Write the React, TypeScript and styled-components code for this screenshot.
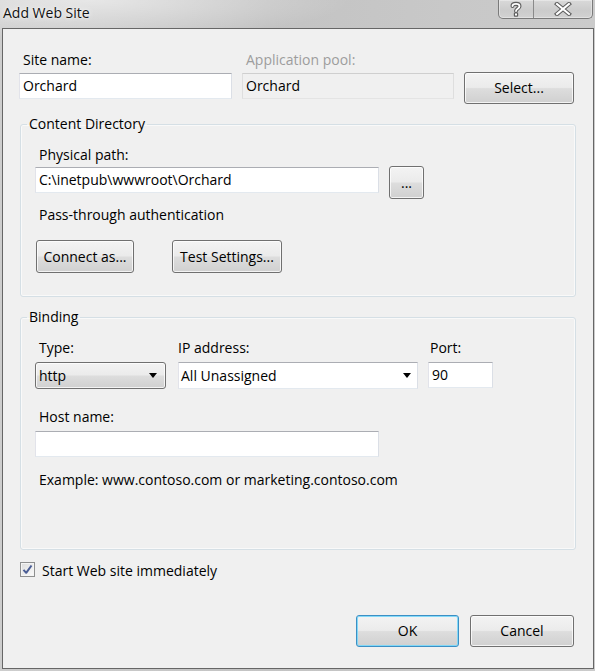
import React from "react";
import styled, { createGlobalStyle } from "styled-components";

const Global = createGlobalStyle`
  html, body { margin: 0; padding: 0; background: #cfcfcf; }
  * { box-sizing: border-box; }
`;

const Window = styled.div`
  width: 595px;
  height: 671px;
  display: flex;
  flex-direction: column;
  background:
    radial-gradient(ellipse 260px 40px at 90px 0px, rgba(255, 255, 255, 0.55), rgba(255, 255, 255, 0) 100%),
    linear-gradient(90deg, #cdcdcd 0%, #c3c3c3 45%, #c8c8c8 75%, #cbcbcb 100%);
  font-family: "Open Sans", "Noto Sans", sans-serif;
  font-size: 14px;
  color: #000;
`;

const TitleBar = styled.div`
  height: 28px;
  flex: none;
  display: flex;
  align-items: flex-start;
`;

const Title = styled.div`
  margin: 4px 0 0 3px;
  font-size: 14px;
  line-height: 17px;
  color: #111;
  text-shadow: 0 0 6px rgba(255, 255, 255, 0.9), 0 0 2px rgba(255, 255, 255, 0.9);
`;

const CaptionGroup = styled.div`
  margin-left: auto;
  margin-right: 2px;
  display: flex;
  height: 19px;
  border: 1px solid #7a7a7a;
  border-top: none;
  border-radius: 0 0 5px 5px;
  overflow: hidden;
  background: linear-gradient(#d9d9d9, #cbcbcb 60%, #d2d2d2);
  box-shadow: inset 0 0 0 1px rgba(255, 255, 255, 0.35);
`;

const CaptionButton = styled.div<{ $w: number }>`
  width: ${(p) => p.$w}px;
  height: 100%;
  display: flex;
  align-items: center;
  justify-content: center;
  & + & {
    border-left: 1px solid #8a8a8a;
  }
`;

const Client = styled.div`
  flex: 1;
  margin: 0 1px 2px 2px;
  border: 1px solid #666666;
  background: #f0f0f0;
  padding-top: 23px;
  display: flex;
  flex-direction: column;
`;

const Label = styled.span<{ $inset?: number; $muted?: boolean }>`
  display: block;
  line-height: 16px;
  height: 16px;
  white-space: nowrap;
  padding-left: ${(p) => (p.$inset ?? 4)}px;
  color: ${(p) => (p.$muted ? "#9d9d9d" : "#000")};
`;

const TextBox = styled.div<{ $w?: number; $disabled?: boolean }>`
  width: ${(p) => (p.$w ? `${p.$w}px` : "100%")};
  height: 26px;
  border: 1px solid;
  border-color: ${(p) =>
    p.$disabled ? "#cfcfcf #dedede #e4e4e4 #dedede" : "#abadb3 #dbdfe6 #e3e9ef #e2e3ea"};
  background: ${(p) => (p.$disabled ? "#f0f0f0" : "#ffffff")};
  padding-left: 3px;
  display: flex;
  align-items: center;
  line-height: 16px;
  white-space: nowrap;
`;

const Button = styled.button<{ $w: number; $h?: number; $default?: boolean }>`
  width: ${(p) => p.$w}px;
  height: ${(p) => p.$h ?? 33}px;
  padding: 0;
  font: inherit;
  color: #000;
  line-height: 16px;
  border: 1px solid ${(p) => (p.$default ? "#3c8fc4" : "#707070")};
  border-radius: 3px;
  background: linear-gradient(#f3f3f3 0%, #ebebeb 48%, #dddddd 52%, #d0d0d0 100%);
  box-shadow: inset 0 0 0 1px ${(p) => (p.$default ? "rgba(120, 215, 250, 0.9)" : "rgba(255, 255, 255, 0.75)")};
  display: flex;
  align-items: center;
  justify-content: center;
  flex: none;
  white-space: nowrap;
`;

const TopGrid = styled.div`
  margin-left: 16px;
  display: grid;
  grid-template-columns: 213px 212px 110px;
  grid-template-rows: 16px auto;
  column-gap: 10px;
  row-gap: 5px;
`;

const SelectSlot = styled.div`
  grid-column: 3;
  grid-row: 2;
  margin-top: -1px;
`;

const Group = styled.fieldset`
  margin: 12px 0 0 17px;
  width: 556px;
  min-width: 0;
  padding: 0;
  border: 1px solid #d5dfe5;
  border-radius: 3px;
  box-shadow: inset 0 0 0 1px rgba(255, 255, 255, 0.6);
`;

const Legend = styled.legend`
  margin-left: 6px;
  padding: 0 2px;
  line-height: 16px;
`;

const GroupBody = styled.div<{ $bottom: number }>`
  padding: 15px 0 ${(p) => p.$bottom}px 14px;
  display: flex;
  flex-direction: column;
`;

const PathRow = styled.div`
  margin-top: 3px;
  display: flex;
  align-items: flex-start;
  gap: 10px;
`;

const PathBox = styled(TextBox)`
  margin-top: 1px;
`;

const Spaced = styled.div<{ $top: number; $left?: number }>`
  margin-top: ${(p) => p.$top}px;
  margin-left: ${(p) => p.$left ?? 0}px;
`;

const ButtonRow = styled.div<{ $gap: number }>`
  display: flex;
  gap: ${(p) => p.$gap}px;
`;

const BindingGrid = styled.div`
  display: grid;
  grid-template-columns: 131px 240px 65px;
  grid-template-rows: 16px 27px;
  row-gap: 6px;
  column-gap: 12px;
  & > :nth-child(3n) {
    margin-left: -2px;
  }
`;

const DropList = styled.div`
  height: 27px;
  border: 1px solid #707070;
  border-radius: 3px;
  background: linear-gradient(#f3f3f3 0%, #ebebeb 48%, #dddddd 52%, #d0d0d0 100%);
  box-shadow: inset 0 0 0 1px rgba(255, 255, 255, 0.75);
  display: flex;
  align-items: center;
  padding: 0 8px 0 3px;
  line-height: 16px;
`;

const ComboEdit = styled.div`
  height: 27px;
  border: 1px solid;
  border-color: #abadb3 #dbdfe6 #e3e9ef #e2e3ea;
  background: #fff;
  display: flex;
  align-items: center;
  padding: 0 6px 0 2px;
  line-height: 16px;
`;

const ComboText = styled.span`
  flex: 1;
  white-space: nowrap;
`;

const Arrow = styled.span`
  width: 0;
  height: 0;
  border-left: 4.5px solid transparent;
  border-right: 4.5px solid transparent;
  border-top: 5px solid #000;
`;

const CheckRow = styled.label`
  margin: 12px 0 0 17px;
  display: flex;
  align-items: flex-start;
  gap: 7px;
`;

const CheckBox = styled.span`
  width: 15px;
  height: 15px;
  border: 1px solid #8e8f8f;
  background: linear-gradient(135deg, #dcdcdc, #fbfbfb);
  box-shadow: inset 0 0 0 1px #f4f4f4;
  display: flex;
  align-items: center;
  justify-content: center;
  flex: none;
`;

const CheckText = styled.span`
  margin-top: 1px;
  line-height: 16px;
`;

const Footer = styled.div`
  margin: 36px 19px 0 0;
  display: flex;
  justify-content: flex-end;
  gap: 11px;
`;

const HelpIcon = () => (
  <svg width="16" height="17" viewBox="0 0 16 17">
    <g fill="none" strokeLinecap="round" strokeLinejoin="round">
      <path d="M4.5 5 C4.5 2.2 11.5 2 11.5 5.2 C11.5 7.6 8 7.8 8 10" stroke="#5e5e5e" strokeWidth="4" />
      <path d="M4.5 5 C4.5 2.2 11.5 2 11.5 5.2 C11.5 7.6 8 7.8 8 10" stroke="#ffffff" strokeWidth="1.8" />
      <rect x="6.4" y="12" width="3.2" height="3.2" rx="0.6" fill="#ffffff" stroke="#5e5e5e" strokeWidth="1.2" />
    </g>
  </svg>
);

const CloseIcon = () => (
  <svg width="18" height="14" viewBox="0 0 18 14">
    <g strokeLinecap="square">
      <path d="M3 2 L15 12 M15 2 L3 12" stroke="#5e5e5e" strokeWidth="4.2" />
      <path d="M3 2 L15 12 M15 2 L3 12" stroke="#ffffff" strokeWidth="2" />
    </g>
  </svg>
);

const CheckMark = () => (
  <svg width="11" height="11" viewBox="0 0 11 11">
    <path d="M1.5 5.8 L4.2 8.8 L9.5 1.5" fill="none" stroke="#4a5d95" strokeWidth="2" strokeLinejoin="round" />
  </svg>
);

export default function App() {
  return (
    <>
      <Global />
      <Window>
        <TitleBar>
          <Title>Add Web Site</Title>
          <CaptionGroup>
            <CaptionButton $w={34}>
              <HelpIcon />
            </CaptionButton>
            <CaptionButton $w={59}>
              <CloseIcon />
            </CaptionButton>
          </CaptionGroup>
        </TitleBar>
        <Client>
          <TopGrid>
            <Label>Site name:</Label>
            <Label $muted>Application pool:</Label>
            <span />
            <TextBox>Orchard</TextBox>
            <TextBox $disabled>Orchard</TextBox>
            <SelectSlot>
              <Button $w={110} $h={32}>Select...</Button>
            </SelectSlot>
          </TopGrid>

          <Group>
            <Legend>Content Directory</Legend>
            <GroupBody $bottom={23}>
              <Label>Physical path:</Label>
              <PathRow>
                <PathBox $w={344}>C:\inetpub\wwwroot\Orchard</PathBox>
                <Button $w={35} $h={33}>...</Button>
              </PathRow>
              <Spaced $top={8}>
                <Label>Pass-through authentication</Label>
              </Spaced>
              <Spaced $top={17} $left={1}>
                <ButtonRow $gap={38}>
                  <Button $w={98}>Connect as...</Button>
                  <Button $w={110}>Test Settings...</Button>
                </ButtonRow>
              </Spaced>
            </GroupBody>
          </Group>

          <Group>
            <Legend>Binding</Legend>
            <GroupBody $bottom={61}>
              <BindingGrid>
                <Label>Type:</Label>
                <Label $inset={0}>IP address:</Label>
                <Label $inset={2}>Port:</Label>
                <DropList>
                  <ComboText>http</ComboText>
                  <Arrow />
                </DropList>
                <ComboEdit>
                  <ComboText>All Unassigned</ComboText>
                  <Arrow />
                </ComboEdit>
                <TextBox>90</TextBox>
              </BindingGrid>
              <Spaced $top={20}>
                <Label>Host name:</Label>
              </Spaced>
              <Spaced $top={6}>
                <TextBox $w={344} />
              </Spaced>
              <Spaced $top={15}>
                <Label>Example: www.contoso.com or marketing.contoso.com</Label>
              </Spaced>
            </GroupBody>
          </Group>

          <CheckRow>
            <CheckBox>
              <CheckMark />
            </CheckBox>
            <CheckText>Start Web site immediately</CheckText>
          </CheckRow>

          <Footer>
            <Button $w={103} $h={32} $default>OK</Button>
            <Button $w={104} $h={32}>Cancel</Button>
          </Footer>
        </Client>
      </Window>
    </>
  );
}
